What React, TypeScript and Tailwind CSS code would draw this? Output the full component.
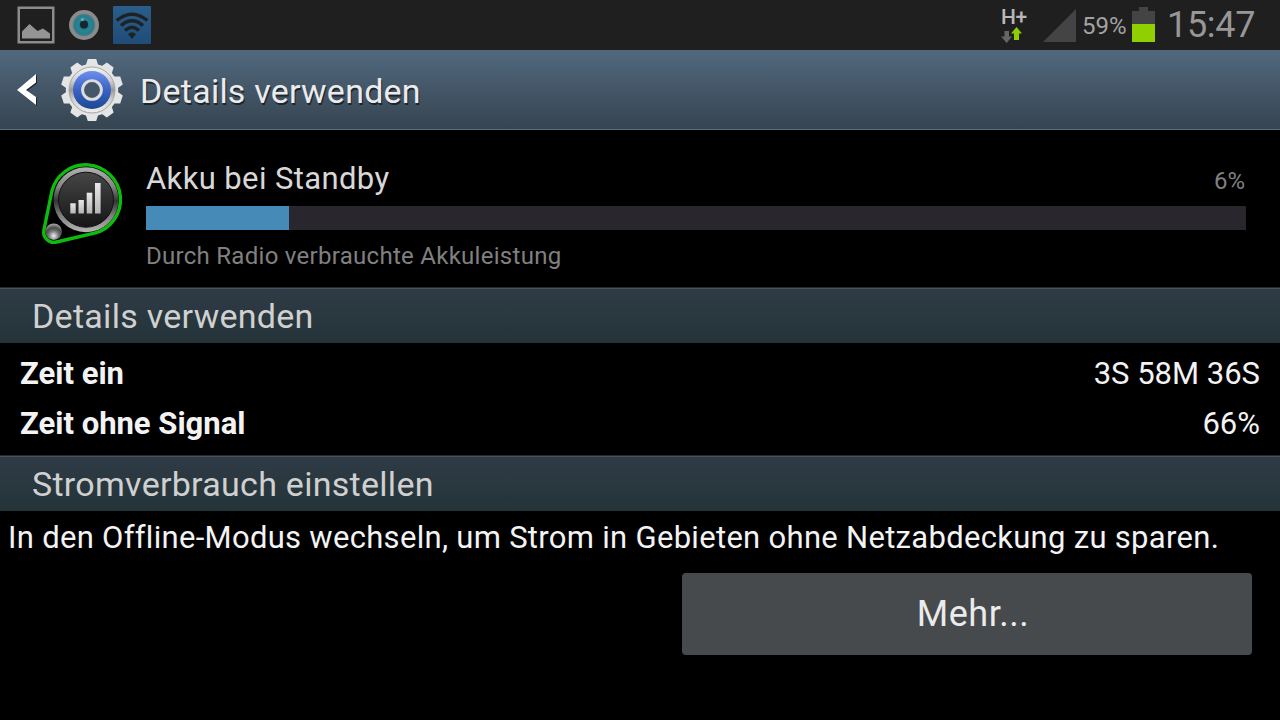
import React from "react";

const TEETH = [0, 36, 72, 108, 144, 180, 216, 252, 288, 324];

function PictureIcon() {
  return (
    <svg width="38" height="38" viewBox="0 0 38 38">
      <rect x="1.75" y="1.75" width="34.5" height="34.5" fill="none" stroke="#8c8c8c" strokeWidth="2.5" />
      <path d="M5 32.5V25.5L12.5 18L20.5 25L26 22.5L33 27.5V32.5Z" fill="#949494" />
    </svg>
  );
}

function EyeIcon() {
  return (
    <svg width="32" height="32" viewBox="0 0 32 32">
      <defs>
        <radialGradient id="iris">
          <stop offset="0" stopColor="#1f5560" />
          <stop offset="0.55" stopColor="#2a8595" />
          <stop offset="0.8" stopColor="#237d91" />
          <stop offset="1" stopColor="#5b7c82" />
        </radialGradient>
      </defs>
      <circle cx="16" cy="16" r="15" fill="#8b8b8b" />
      <circle cx="16" cy="16" r="11.3" fill="url(#iris)" />
      <circle cx="16" cy="15.5" r="4" fill="#17252c" />
      <circle cx="14.5" cy="10.5" r="1.8" fill="#5ba5b1" />
    </svg>
  );
}

function WifiIcon() {
  return (
    <svg width="38" height="38" viewBox="0 0 38 38">
      <defs>
        <linearGradient id="wifi" x1="0" y1="0" x2="0" y2="1">
          <stop offset="0" stopColor="#2b5e8a" />
          <stop offset="1" stopColor="#1f4c78" />
        </linearGradient>
      </defs>
      <rect width="38" height="38" rx="1" fill="url(#wifi)" />
      <g fill="none" stroke="#1d2226" strokeWidth="3.4">
        <path d="M3.6 14.5Q19 1.8 34.4 14.5" />
        <path d="M8 19.6Q19 10 30 19.6" />
        <path d="M12 24.4Q19 18 26 24.4" />
      </g>
      <path d="M15 28Q19 24.5 23 28L19 33Z" fill="#1d2226" />
    </svg>
  );
}

function DataArrows() {
  return (
    <svg width="22" height="16" viewBox="0 0 22 16">
      <path d="M3.5 4H8V9.5H11L5.7 16L0 9.5H3.5Z" fill="#666" />
      <path d="M13 13V6.5H10L15.5 0L21 6.5H18V13Z" fill="#8fce00" />
    </svg>
  );
}

function GearIcon() {
  return (
    <svg width="62" height="64" viewBox="-31 -32 62 64">
      <defs>
        <linearGradient id="metal" x1="0" y1="0" x2="0" y2="1">
          <stop offset="0" stopColor="#f4f4f4" />
          <stop offset="0.3" stopColor="#d0d0d0" />
          <stop offset="0.5" stopColor="#999" />
          <stop offset="0.7" stopColor="#cdcdcd" />
          <stop offset="1" stopColor="#f0f0f0" />
        </linearGradient>
        <linearGradient id="blue" x1="0" y1="0" x2="0" y2="1">
          <stop offset="0" stopColor="#6c8fee" />
          <stop offset="0.5" stopColor="#3963c4" />
          <stop offset="1" stopColor="#1c4893" />
        </linearGradient>
      </defs>
      {TEETH.map((deg) => (
        <path key={deg} d="M-6.5 -24L-4.2 -31H4.2L6.5 -24Z" fill="#e4e5e6" transform={`rotate(${deg})`} />
      ))}
      <circle r="26.2" fill="#e4e4e4" />
      <circle r="23" fill="url(#metal)" stroke="#a5a5a5" strokeWidth="1" />
      <circle r="19" fill="url(#blue)" />
      <circle r="9.4" fill="#45586a" stroke="#dcdcdc" strokeWidth="2.9" />
    </svg>
  );
}

function StandbyIcon() {
  return (
    <svg width="84" height="84" viewBox="40 162 84 84">
      <defs>
        <linearGradient id="ring" x1="0" y1="0" x2="0" y2="1">
          <stop offset="0" stopColor="#b0b0b0" />
          <stop offset="0.3" stopColor="#858585" />
          <stop offset="0.52" stopColor="#343434" />
          <stop offset="0.75" stopColor="#808080" />
          <stop offset="1" stopColor="#b5b5b5" />
        </linearGradient>
        <linearGradient id="face" x1="0" y1="0" x2="0" y2="1">
          <stop offset="0" stopColor="#464646" />
          <stop offset="1" stopColor="#151515" />
        </linearGradient>
        <linearGradient id="bars" x1="0" y1="0" x2="0" y2="1">
          <stop offset="0" stopColor="#e8e8e8" />
          <stop offset="1" stopColor="#b5b5b5" />
        </linearGradient>
        <radialGradient id="ball" cx="0.5" cy="0.75" r="0.75">
          <stop offset="0" stopColor="#f0f0f0" />
          <stop offset="0.4" stopColor="#777" />
          <stop offset="0.65" stopColor="#4a4a4a" />
          <stop offset="1" stopColor="#b0b0b0" />
        </radialGradient>
      </defs>
      <path
        d="M51.8 191.5A34.8 34.8 0 1 1 94.5 233.2L56.5 242A10.3 10.3 0 0 1 43.9 230Z"
        fill="#000"
        stroke="#0cbd0c"
        strokeWidth="3.4"
      />
      <circle cx="86" cy="199.7" r="29.7" fill="url(#face)" />
      <circle cx="86" cy="199.7" r="32.5" fill="url(#ring)" />
      <circle cx="86" cy="199.7" r="27.5" fill="url(#face)" stroke="#111" strokeWidth="1" />
      <circle cx="53.7" cy="231.7" r="8.3" fill="url(#ball)" />
      <g fill="url(#bars)">
        <rect x="70.3" y="203.3" width="5.4" height="10.2" />
        <rect x="78.5" y="200" width="5.4" height="13.5" />
        <rect x="86.7" y="192.7" width="5.6" height="20.8" />
        <rect x="95" y="183" width="5.6" height="30.5" />
      </g>
    </svg>
  );
}

function StatusBar() {
  return (
    <div className="flex h-[50px] items-start justify-between bg-[#1f1f1f]">
      <div className="flex items-center pt-1.5 pl-[17px]">
        <PictureIcon />
        <div className="px-[13px]">
          <EyeIcon />
        </div>
        <WifiIcon />
      </div>
      <div className="flex items-start pr-[26px]">
        <div className="w-[42px] pt-[7px]">
          <div className="text-[21px] leading-5 font-medium tracking-[-0.5px] text-[#b8b8b8]">H+</div>
          <DataArrows />
        </div>
        <svg className="mt-[9px]" width="34" height="33" viewBox="0 0 34 33">
          <path d="M0 33L33 0V33Z" fill="#444" />
        </svg>
        <div className="ml-[5px] w-[50px] pt-[10px] text-2xl text-[#a3a3a3]">59%</div>
        <svg className="mt-[7px]" width="23" height="35" viewBox="0 0 23 35">
          <path d="M7 0H16V4H23V18H0V4H7Z" fill="#444" />
          <rect y="17" width="23" height="18" fill="#90d000" />
        </svg>
        <div className="ml-3 w-[87px] pt-[5px] text-[36px] leading-10 tracking-[-0.3px] whitespace-nowrap text-[#979797]">
          15:47
        </div>
      </div>
    </div>
  );
}

function TitleBar() {
  return (
    <header className="flex h-20 items-center border-b border-[#587080] bg-linear-to-b from-[#51697f] to-[#364450]">
      <svg className="ml-[17px] drop-shadow-[1px_1px_0_#1b252e]" width="20" height="32" viewBox="0 0 20 32">
        <path d="M19 0V8.5L9 16L19 23V31L0 16Z" fill="#fff" />
      </svg>
      <div className="ml-6">
        <GearIcon />
      </div>
      <h1 className="ml-[17px] pt-0.5 text-[34px] leading-10 tracking-[0.23px] text-[#ebebeb] [text-shadow:1px_2px_0_#1b252e]">
        Details verwenden
      </h1>
    </header>
  );
}

function SectionHeader({ title }: { title: string }) {
  return (
    <h2 className="h-14 border-t border-[#20292f] bg-linear-to-b from-[#2f3b46] to-[#243439] pl-8 text-[34px] leading-[57px] tracking-[0.28px] text-[#d0d0d0] shadow-[inset_0_1px_0_#46535c]">
      {title}
    </h2>
  );
}

function DetailRow({ label, value }: { label: string; value: string }) {
  return (
    <div className="flex h-[50px] justify-between px-5 text-[31px] leading-[50px] text-[#f3f3f3]">
      <span className="font-bold">{label}</span>
      <span>{value}</span>
    </div>
  );
}

export default function App() {
  return (
    <div className="flex h-[720px] w-[1280px] flex-col overflow-hidden bg-black font-['Roboto',sans-serif]">
      <StatusBar />
      <TitleBar />
      <section className="flex h-[157px] pr-[34px] pl-10">
        <div className="w-[106px] pt-8">
          <StandbyIcon />
        </div>
        <div className="flex-1 pt-[29px]">
          <div className="flex h-[47px] items-baseline justify-between">
            <span className="text-[31px] leading-10 tracking-[0.38px] text-[#d8d8d8]">Akku bei Standby</span>
            <span className="pr-px text-2xl text-[#808080]">6%</span>
          </div>
          <div className="h-6 bg-[#29262d]">
            <div className="h-6 w-[143px] bg-[#468ab7]" />
          </div>
          <p className="pt-2.5 text-2xl tracking-[0.28px] text-[#808080]">Durch Radio verbrauchte Akkuleistung</p>
        </div>
      </section>
      <SectionHeader title="Details verwenden" />
      <div className="h-28 pt-1.5">
        <DetailRow label="Zeit ein" value="3S 58M 36S" />
        <DetailRow label="Zeit ohne Signal" value="66%" />
      </div>
      <SectionHeader title="Stromverbrauch einstellen" />
      <p className="pl-2 text-[31px] leading-[54px] tracking-[0.3px] whitespace-nowrap text-[#f3f3f3]">
        In den Offline-Modus wechseln, um Strom in Gebieten ohne Netzabdeckung zu sparen.
      </p>
      <div className="flex justify-end pt-2 pr-7">
        <button className="h-[82px] w-[570px] rounded bg-[#464a4d] pl-3 text-[36px] tracking-[0.5px] text-[#ebebeb]">
          Mehr...
        </button>
      </div>
    </div>
  );
}
